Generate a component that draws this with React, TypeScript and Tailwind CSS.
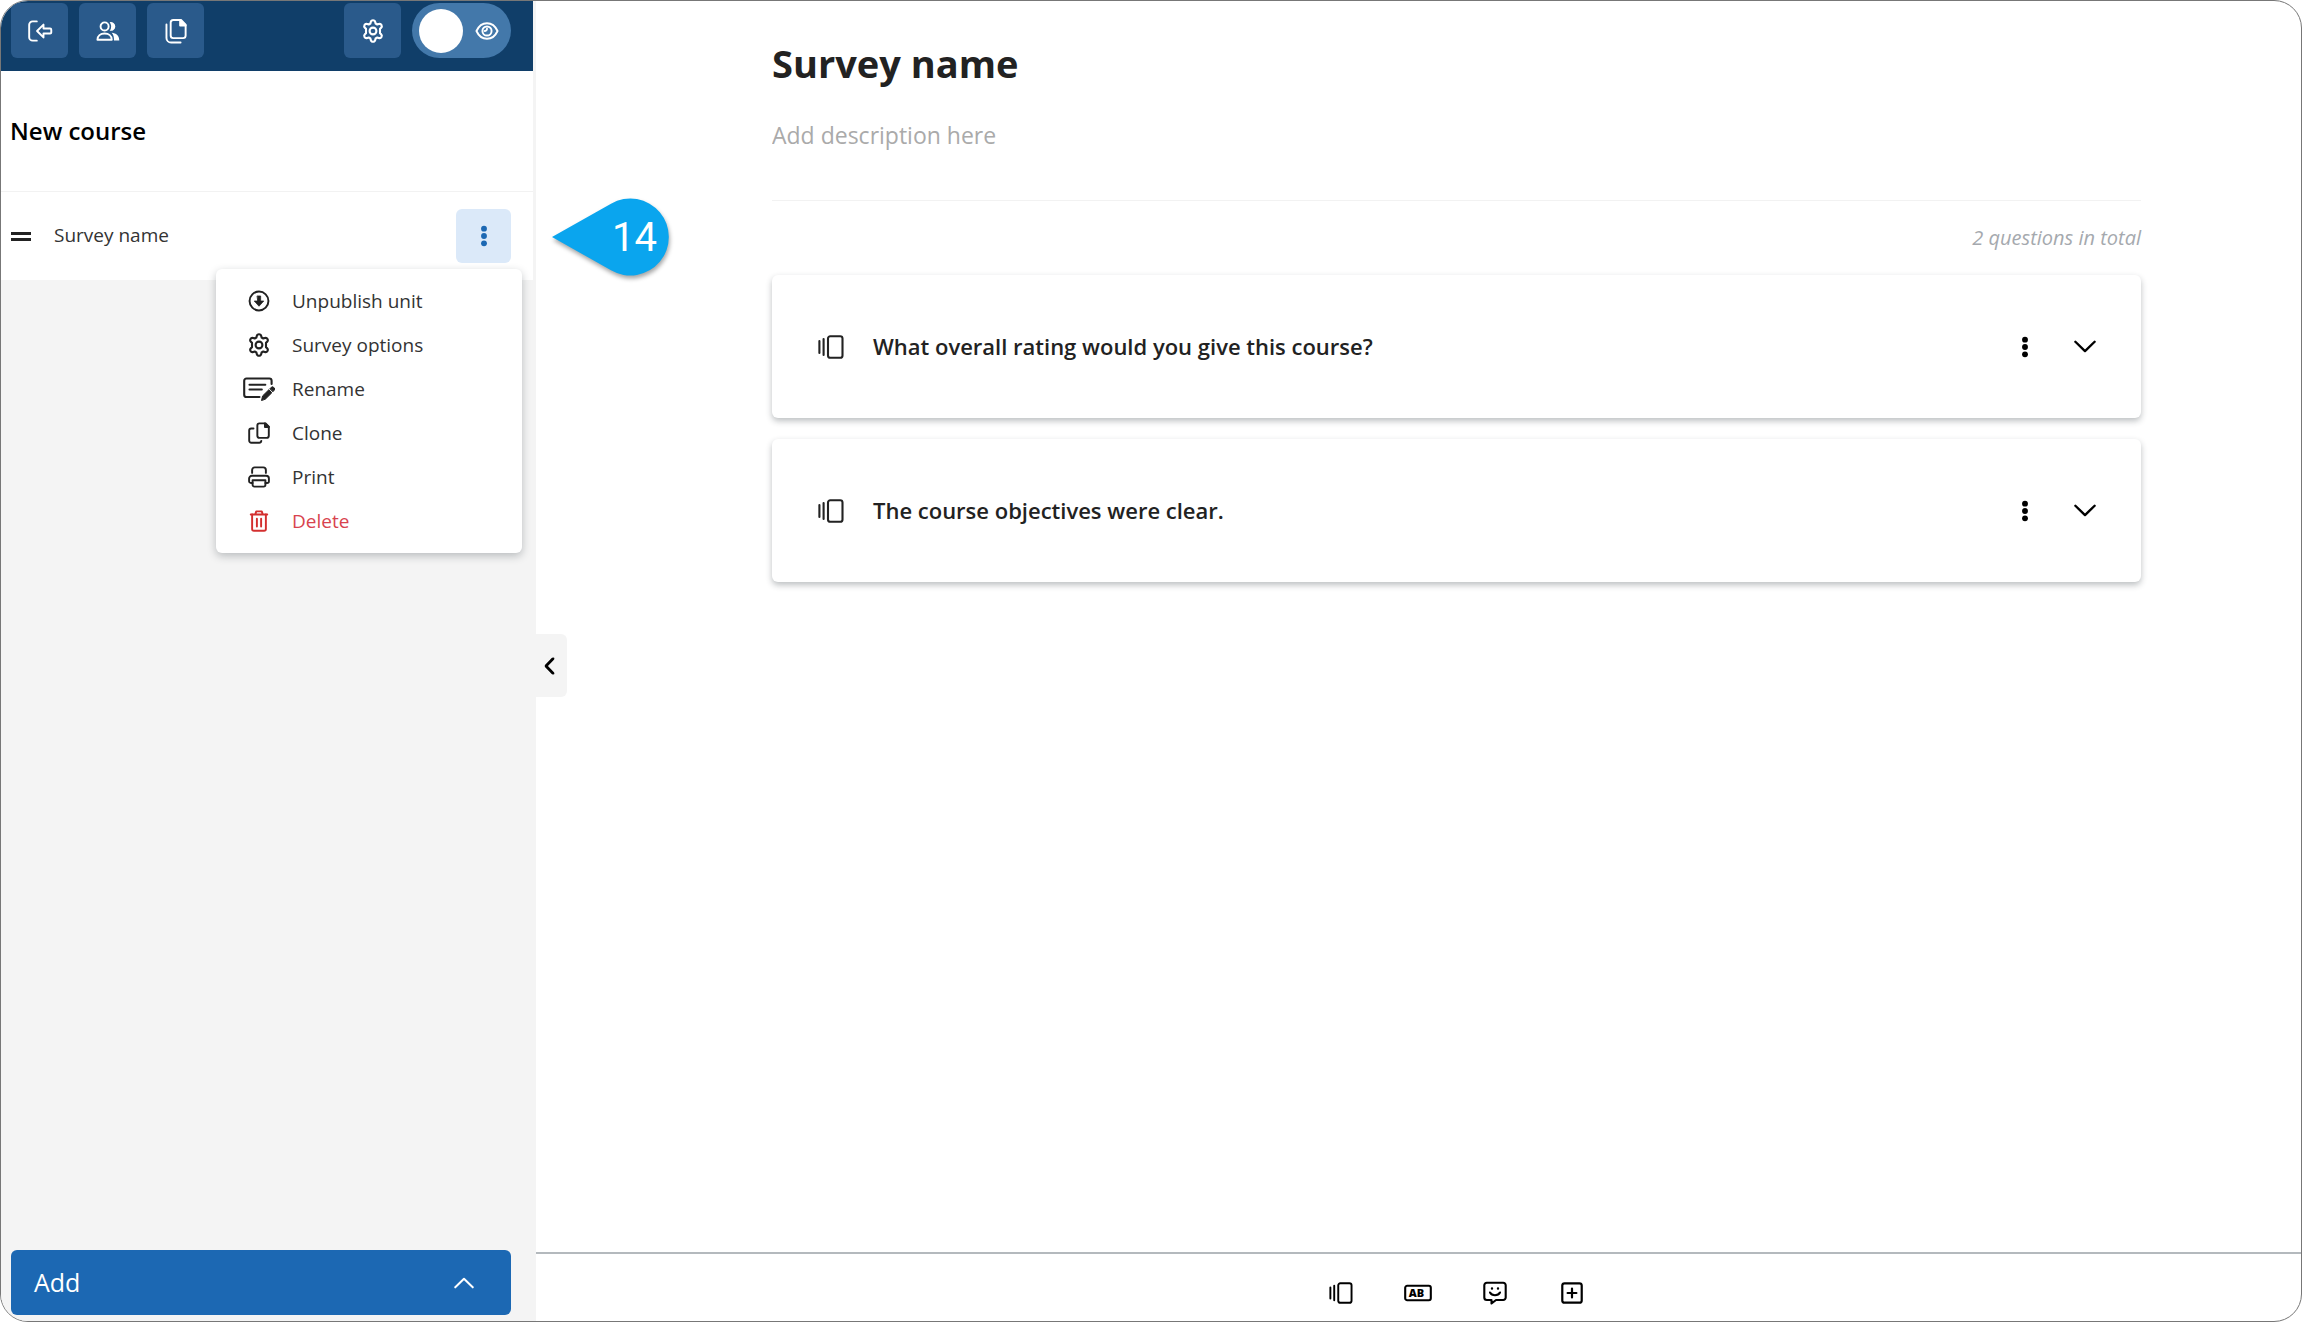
import { useState, type ReactNode, type SVGProps } from 'react';
import clsx from 'clsx';

type IconProps = SVGProps<SVGSVGElement>;

function Icon({ children, ...props }: IconProps) {
  return (
    <svg
      viewBox="0 0 24 24"
      fill="none"
      stroke="currentColor"
      strokeWidth={2.1}
      strokeLinecap="round"
      strokeLinejoin="round"
      aria-hidden="true"
      {...props}
    >
      {children}
    </svg>
  );
}

const ExitIcon = (props: IconProps) => (
  <Icon viewBox="0 0 28 24" {...props}>
    <path d="M10.5 1.5H6A3.8 3.8 0 0 0 2.2 5.300v13.400A3.800 3.800 0 0 0 6 22.500h4.500" />
    <path d="M10.800 12l7-7v4.200h7.200a1.300 1.300 0 0 1 1.300 1.300v3a1.300 1.300 0 0 1-1.300 1.300h-7.200V19z" />
  </Icon>
);

const UsersIcon = (props: IconProps) => (
  <Icon viewBox="0 0 26 24" {...props}>
    <circle cx="9.3" cy="7" r="4.4" />
    <path d="M1.5 21.5c0-4.300 3.200-6.800 7.800-6.800s7.800 2.500 7.800 6.800z" />
    <path d="M14.800 2.400a4.800 4.800 0 1 1 0 9.200 7.500 7.500 0 0 0 0-9.200z" fill="currentColor" stroke="none" />
    <path d="M17 14c5 .3 8.300 3.200 8.300 8.300H19.500c.2-3.600-.6-6.300-2.500-8.300z" fill="currentColor" stroke="none" />
  </Icon>
);

const FilesIcon = (props: IconProps) => (
  <Icon viewBox="0 0 24 28" {...props}>
    <path d="M9 2h8.500L22.500 7v12a2.800 2.800 0 0 1-2.800 2.800H9A2.800 2.800 0 0 1 6.200 19V4.800A2.800 2.800 0 0 1 9 2z" />
    <path d="M16.500 2v6h6z" fill="currentColor" />
    <path d="M1.600 7v14.500a5 5 0 0 0 5 5H17" />
  </Icon>
);

const GearIcon = (props: IconProps) => (
  <Icon {...props}>
    <circle cx="12" cy="12" r="3.400" />
    <path d="M9.700 3.200C10 1.800 10.700 1.200 12 1.200s2 .6 2.300 2l.3 1.300 1.700 1 1.400-.5c1.300-.4 2.200-.1 2.800 1s.5 2-.5 2.900l-1 .9v4.400l1 .9c1 .9 1.100 1.800.5 2.900s-1.500 1.400-2.800 1l-1.400-.5-1.700 1-.3 1.300c-.3 1.400-1 2-2.300 2s-2-.6-2.300-2l-.3-1.300-1.700-1-1.400.5c-1.300.4-2.200.1-2.800-1s-.5-2 .5-2.900l1-.9V9.800l-1-.9c-1-.9-1.100-1.800-.5-2.900s1.500-1.400 2.800-1l1.400.5 1.700-1z" />
  </Icon>
);

const EyeIcon = (props: IconProps) => (
  <Icon viewBox="0 0 26 24" {...props}>
    <path d="M1.500 12C4 6.500 8 3.500 13 3.500S22 6.500 24.500 12C22 17.500 18 20.500 13 20.500S4 17.500 1.500 12z" />
    <circle cx="13" cy="12" r="5" />
    <path d="M13 9.500A2.500 2.500 0 0 1 10.500 12" />
  </Icon>
);

const KebabIcon = (props: IconProps) => (
  <Icon viewBox="0 0 8 24" fill="currentColor" stroke="none" {...props}>
    <circle cx="4" cy="4" r="3.200" />
    <circle cx="4" cy="12" r="3.200" />
    <circle cx="4" cy="20" r="3.200" />
  </Icon>
);

const UnpublishIcon = (props: IconProps) => (
  <Icon {...props}>
    <circle cx="12" cy="12" r="10.300" />
    <path d="M10.200 6.500h3.600V12h3.400L12 17.700 6.800 12h3.400z" fill="currentColor" strokeWidth={0.8} />
  </Icon>
);

const RenameIcon = (props: IconProps) => (
  <Icon viewBox="0 0 32 24" {...props}>
    <path d="M16.500 20H3.500A2.300 2.300 0 0 1 1.200 17.700V3.800a2.300 2.300 0 0 1 2.300-2.300h22.800a2.300 2.300 0 0 1 2.300 2.300V7" />
    <path d="M6.500 7.800h15.800M6.500 12.500h12.300" />
    <path d="M18.600 23.200l1-4.300 6.200-6.100 3 3-6.200 6.100zM27 11.600l1.300-1.300a1.600 1.600 0 0 1 2.300 0l.6.6a1.600 1.600 0 0 1 0 2.300L30 14.600z" fill="currentColor" strokeWidth={1} />
  </Icon>
);

const CloneIcon = (props: IconProps) => (
  <Icon {...props}>
    <path d="M12.500 1.500h6.700l3.500 3.500v10a2.300 2.300 0 0 1-2.300 2.300h-7.900a2.300 2.300 0 0 1-2.300-2.300V3.800a2.300 2.300 0 0 1 2.300-2.300z" />
    <path d="M18.500 1.500V5.500h4.200z" fill="currentColor" />
    <path d="M6 7H3.600a2.300 2.300 0 0 0-2.300 2.300v11a2.300 2.300 0 0 0 2.300 2.300h8.600a2.300 2.300 0 0 0 2.300-2" />
  </Icon>
);

const PrintIcon = (props: IconProps) => (
  <Icon {...props}>
    <path d="M4.500 7.500V4.300a2.800 2.800 0 0 1 2.800-2.800h9.400a2.800 2.800 0 0 1 2.800 2.800v3.200" />
    <path d="M5 18.500H3.200a2 2 0 0 1-2-2v-2.800a3 3 0 0 1 3-3h15.600a3 3 0 0 1 3 3v2.800a2 2 0 0 1-2 2H19" />
    <path d="M5 15.500h14v5a2 2 0 0 1-2 2H7a2 2 0 0 1-2-2z" />
  </Icon>
);

const TrashIcon = (props: IconProps) => (
  <Icon {...props}>
    <path d="M3 5h18M8 4.500l1-3h6l1 3" />
    <path d="M4.500 5v15.600a2 2 0 0 0 2 2h11a2 2 0 0 0 2-2V5" />
    <path d="M9.700 9.500v8.500M14.300 9.500v8.500" />
  </Icon>
);

const CardsIcon = (props: IconProps) => (
  <Icon viewBox="0 0 26 24" {...props}>
    <rect x="10" y="1.300" width="14.500" height="21.400" rx="2.300" />
    <path d="M1.400 6v12M5.600 4v16" />
  </Icon>
);

const TextIcon = (props: IconProps) => (
  <Icon viewBox="0 0 28 18" {...props}>
    <rect x="1.200" y="1.800" width="25.600" height="14.400" rx="2" />
    <text
      x="12.500"
      y="12.800"
      textAnchor="middle"
      fill="currentColor"
      stroke="none"
      className="font-['Open_Sans'] text-[11px] font-extrabold"
    >
      AB
    </text>
  </Icon>
);

const SmileIcon = (props: IconProps) => (
  <Icon {...props}>
    <path d="M3.800 1.800h16.400a2.500 2.500 0 0 1 2.500 2.500v12.200a2.500 2.500 0 0 1-2.500 2.500H13l-4.500 3.500V19H3.800a2.500 2.500 0 0 1-2.500-2.500V4.300a2.500 2.500 0 0 1 2.500-2.500z" />
    <path d="M7 11.500c2 3.600 8 3.600 10 0" />
    <path d="M9 7.400v.2M15 7.400v.2" strokeWidth={2.400} />
  </Icon>
);

const PlusBoxIcon = (props: IconProps) => (
  <Icon strokeWidth={2.400} {...props}>
    <rect x="1.400" y="1.400" width="21.200" height="21.200" rx="2.500" />
    <path d="M12 7.200v9.600M7.200 12h9.600" />
  </Icon>
);

const ChevronIcon = (props: IconProps) => (
  <Icon viewBox="0 0 24 14" strokeWidth={2.400} {...props}>
    <path d="M1.500 1.800L12 12 22.500 1.800" />
  </Icon>
);

const menuItems = [
  { label: 'Unpublish unit', icon: <UnpublishIcon className="size-[22px]" /> },
  { label: 'Survey options', icon: <GearIcon className="size-6" /> },
  { label: 'Rename', icon: <RenameIcon className="h-6 w-8 shrink-0" /> },
  { label: 'Clone', icon: <CloneIcon className="size-[22px]" /> },
  { label: 'Print', icon: <PrintIcon className="size-[22px]" /> },
  { label: 'Delete', icon: <TrashIcon className="size-[22px] text-[#d32f2f]" />, danger: true },
];

const questions = ['What overall rating would you give this course?', 'The course objectives were clear.'];

const tools = [
  { label: 'Multiple choice', icon: <CardsIcon className="h-[22px] w-[26px]" /> },
  { label: 'Free text', icon: <TextIcon className="h-[18px] w-7" /> },
  { label: 'Likert scale', icon: <SmileIcon className="size-6" /> },
  { label: 'Add more', icon: <PlusBoxIcon className="size-[22px]" /> },
];

function HeaderButton({ label, children }: { label: string; children: ReactNode }) {
  return (
    <button
      type="button"
      aria-label={label}
      className="flex h-[55px] w-[57px] items-center justify-center rounded-md bg-[#2a5a8b] text-white"
    >
      {children}
    </button>
  );
}

function Callout({ step }: { step: number }) {
  return (
    <div className="absolute top-1/2 left-full z-20 ml-4 flex h-20 w-[122px] -translate-y-1/2 items-center justify-end pt-1 pr-[14px]">
      <svg
        viewBox="0 0 122 80"
        className="absolute inset-0 size-full drop-shadow-[1px_3px_2px_rgba(0,0,0,0.35)]"
        aria-hidden="true"
      >
        <path d="M3 41L62 7.700a38.500 38.500 0 1 1 0 66.600z" fill="#0aa5ee" />
      </svg>
      <span className="relative font-['Roboto',sans-serif] text-[40px] leading-none text-white">{step}</span>
    </div>
  );
}

function Sidebar() {
  const [published, setPublished] = useState(false);

  return (
    <aside className="relative z-10 flex w-[535px] shrink-0 flex-col bg-[#f4f4f4] pr-[3px]">
      <header className="flex h-[70px] items-start bg-[#103e69] pt-[2px] pr-[22px] pl-[10px]">
        <div className="flex gap-[11px]">
          <HeaderButton label="Exit">
            <ExitIcon className="h-[22px] w-[26px]" />
          </HeaderButton>
          <HeaderButton label="Users">
            <UsersIcon className="h-[22px] w-6" />
          </HeaderButton>
          <HeaderButton label="Course files">
            <FilesIcon className="h-[26px] w-[22px]" />
          </HeaderButton>
        </div>
        <div className="ml-auto flex gap-[11px]">
          <HeaderButton label="Course settings">
            <GearIcon className="size-6" />
          </HeaderButton>
          <label className="flex h-[55px] w-[99px] cursor-pointer items-center justify-between rounded-full bg-[#4378aa] pr-3 pl-[7px] text-white">
            <input
              type="checkbox"
              aria-label="Publish course"
              checked={published}
              onChange={(e) => setPublished(e.target.checked)}
              className="size-11 appearance-none rounded-full bg-white"
            />
            <EyeIcon className="h-[22px] w-6" />
          </label>
        </div>
      </header>

      <div className="flex h-[121px] items-center border-b border-[#f2f2f2] bg-white pl-[9px]">
        <h2 className="text-2xl font-semibold text-black">New course</h2>
      </div>

      <div className="relative flex h-[88px] items-center bg-white pr-[22px] pl-[10px]">
        <span className="flex w-5 flex-col gap-[3px]">
          <span className="h-[3px] bg-[#222]" />
          <span className="h-[3px] bg-[#222]" />
        </span>
        <a href="#survey" className="ml-[23px] pb-[2px] text-[19px] text-[#333]">
          Survey name
        </a>
        <button
          type="button"
          aria-label="Unit actions"
          className="ml-auto flex h-[54px] w-[55px] items-center justify-center rounded-md bg-[#dbe9f9] text-[#1c68b3]"
        >
          <KebabIcon className="h-[22px] w-2" />
        </button>

        <Callout step={14} />

        <ul className="absolute top-[77px] right-[11px] z-10 w-[306px] rounded-md bg-white py-[10px] shadow-[0_3px_8px_rgba(34,42,51,0.28)]">
          {menuItems.map((item) => (
            <li key={item.label}>
              <button
                type="button"
                className={clsx(
                  'flex h-11 w-full items-center pl-[27px] text-left text-[19px]',
                  item.danger ? 'text-[#d8434e]' : 'text-[#333]',
                )}
              >
                <span className="flex w-8 shrink-0 items-center justify-center text-[#222]">{item.icon}</span>
                <span className="ml-[17px]">{item.label}</span>
              </button>
            </li>
          ))}
        </ul>
      </div>

      <button
        type="button"
        className="mt-auto mr-[22px] mb-[6px] ml-[10px] flex h-[65px] items-center justify-between rounded-md bg-[#1c68b3] pr-[37px] pl-[23px] text-[25px] text-white"
      >
        Add
        <ChevronIcon className="h-3 w-5 rotate-180" />
      </button>

      <button
        type="button"
        aria-label="Collapse sidebar"
        className="absolute top-[633px] left-full flex h-[63px] w-[31px] items-center rounded-r-md bg-[#f4f4f4] pl-[5px] text-black"
      >
        <ChevronIcon className="h-[10px] w-[17px] rotate-90" strokeWidth={4} />
      </button>
    </aside>
  );
}

function QuestionCard({ title }: { title: string }) {
  return (
    <li className="flex h-[143px] items-center rounded-md bg-white pr-[45px] pl-[46px] shadow-[0_3px_6px_rgba(34,42,51,0.3)]">
      <CardsIcon className="h-6 w-[26px] shrink-0 text-[#222]" />
      <h3 className="ml-[29px] text-[22px] font-semibold text-[#222]">{title}</h3>
      <div className="ml-auto flex items-center gap-[45px] text-black">
        <button type="button" aria-label="Question actions">
          <KebabIcon className="h-[22px] w-2" />
        </button>
        <button type="button" aria-label="Expand question">
          <ChevronIcon className="h-[13px] w-[22px]" strokeWidth={2.600} />
        </button>
      </div>
    </li>
  );
}

export default function App() {
  return (
    <div className="flex h-screen overflow-hidden rounded-[28px] border border-[#777] bg-white font-['Open_Sans','Noto_Sans',sans-serif]">
      <Sidebar />

      <main className="flex min-w-0 flex-1 flex-col">
        <div className="flex-1 pr-[160px] pl-[236px]">
          <h1 className="pt-[35px] text-[38px] leading-[54px] font-bold text-[#222]">Survey name</h1>
          <div className="flex h-[111px] items-center border-b border-[#f2f2f2] pb-5">
            <input
              type="text"
              aria-label="Description"
              placeholder="Add description here"
              className="w-full text-[23px] outline-none placeholder:text-[#aaa]"
            />
          </div>
          <p className="flex h-[74px] items-center justify-end text-[20px] text-[#a5a9ae] italic">
            2 questions in total
          </p>
          <ul className="flex flex-col gap-[21px]">
            {questions.map((q) => (
              <QuestionCard key={q} title={q} />
            ))}
          </ul>
        </div>

        <footer className="flex h-[69px] items-center justify-center gap-[49px] border-t-2 border-[#b4b9bd] pt-[10px] pr-[160px] pl-[236px] text-black">
          {tools.map((tool) => (
            <button
              key={tool.label}
              type="button"
              aria-label={tool.label}
              className="flex w-7 items-center justify-center"
            >
              {tool.icon}
            </button>
          ))}
        </footer>
      </main>
    </div>
  );
}
